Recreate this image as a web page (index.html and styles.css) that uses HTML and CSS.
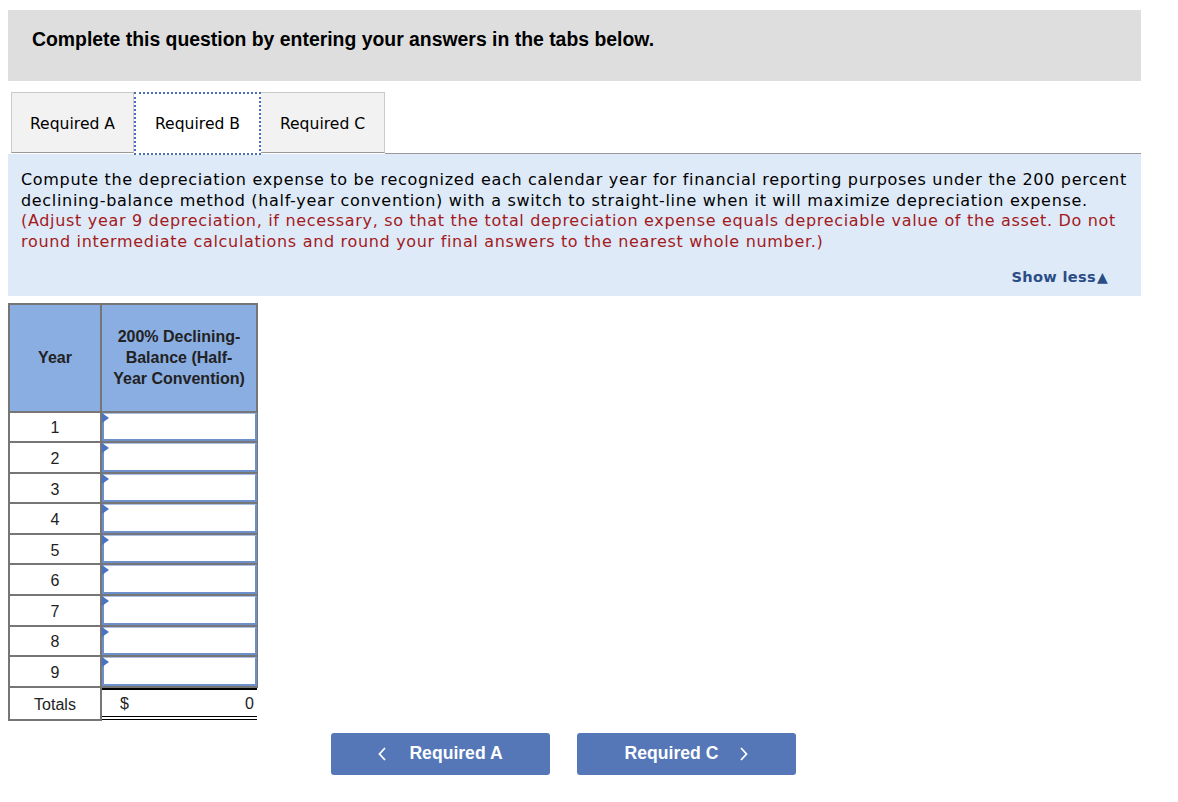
FILE: index.html
```html
<!DOCTYPE html>
<html lang="en">
<head>
    <meta charset="UTF-8">
    <title>Required B</title>
    <link rel="stylesheet" href="styles.css">
</head>
<body>
    <div class="page">
        <div class="banner">
            <h1>Complete this question by entering your answers in the tabs below.</h1>
        </div>

        <div class="tabs">
            <div class="tab">Required A</div>
            <div class="tab active">Required B</div>
            <div class="tab last">Required C</div>
            <div class="tab-rest"></div>
        </div>

        <div class="instructions">
            <p>Compute the depreciation expense to be recognized each calendar year for financial reporting purposes under the 200 percent declining-balance method (half-year convention) with a switch to straight-line when it will maximize depreciation expense.
            <span class="red">(Adjust year 9 depreciation, if necessary, so that the total depreciation expense equals depreciable value of the asset. Do not round intermediate calculations and round your final answers to the nearest whole number.)</span></p>
            <div class="show-less">Show less<span class="tri">&#9650;</span></div>
        </div>

        <table class="grid">
            <thead>
                <tr>
                    <th class="year-col">Year</th>
                    <th class="val-col">200% Declining-<br>Balance (Half-<br>Year Convention)</th>
                </tr>
            </thead>
            <tbody>
                <tr><td>1</td><td class="cell"><div class="entry"></div></td></tr>
                <tr><td>2</td><td class="cell"><div class="entry"></div></td></tr>
                <tr><td>3</td><td class="cell"><div class="entry"></div></td></tr>
                <tr><td>4</td><td class="cell"><div class="entry"></div></td></tr>
                <tr><td>5</td><td class="cell"><div class="entry"></div></td></tr>
                <tr><td>6</td><td class="cell"><div class="entry"></div></td></tr>
                <tr><td>7</td><td class="cell"><div class="entry"></div></td></tr>
                <tr><td>8</td><td class="cell"><div class="entry"></div></td></tr>
                <tr><td>9</td><td class="cell"><div class="entry"></div></td></tr>
                <tr class="totals">
                    <td>Totals</td>
                    <td class="total-cell"><span>$</span><span>0</span></td>
                </tr>
            </tbody>
        </table>

        <div class="nav">
            <button class="nav-btn">
                <svg class="chev" width="8" height="14" viewBox="0 0 8 14"><polyline points="7,1 1.5,7 7,13" fill="none" stroke="#fff" stroke-width="1.8"/></svg>
                Required A
            </button>
            <button class="nav-btn">
                Required C
                <svg class="chev right" width="8" height="14" viewBox="0 0 8 14"><polyline points="1,1 6.5,7 1,13" fill="none" stroke="#fff" stroke-width="1.8"/></svg>
            </button>
        </div>
    </div>
</body>
</html>
```

FILE: styles.css
```css
body {
    margin: 0;
    padding: 10px 0 0 8px;
    font-family: "Liberation Sans", Arial, sans-serif;
    color: #000;
    background: #fff;
}
.page {
    width: 1133px;
}
.banner {
    background: #dedede;
    height: 71px;
    padding: 0 24px;
    display: flex;
    align-items: center;
}
.banner h1 {
    margin: 0;
    font-size: 19.4px;
    font-weight: bold;
    position: relative;
    top: -6px;
}
.tabs {
    display: flex;
    margin-top: 11px;
    font-family: "DejaVu Sans", Verdana, sans-serif;
    font-size: 15.6px;
}
.tab {
    height: 61px;
    box-sizing: border-box;
    padding-top: 3px;
    display: flex;
    align-items: center;
    justify-content: center;
    background: #f2f2f2;
    border: 1px solid #cbcbcb;
    border-bottom: 1px solid #999;
    margin-left: 3px;
    width: 123px;
}
.tab.active {
    margin-left: 0;
    padding-top: 1px;
    background: #fff;
    border: 2px dotted #4a6fb5;
    width: 127px;
    height: 63px;
    margin-bottom: -1px;
}
.tab.last {
    margin-left: 0;
    border-left: none;
    width: 124px;
}
.tab-rest {
    flex: 1;
    border-bottom: 1px solid #999;
}
.instructions {
    background: #deeaf8;
    padding: 16px 13px 8px 13px;
    font-family: "DejaVu Sans", Verdana, sans-serif;
    font-size: 16px;
    line-height: 20.7px;
    letter-spacing: 0.68px;
}
.instructions p {
    margin: 0;
}
.red {
    color: #a3191c;
}
.show-less {
    text-align: right;
    margin-top: 14px;
    margin-right: 20px;
    font-size: 14.6px;
    letter-spacing: 0.3px;
    font-weight: bold;
    color: #2b4d86;
}
.tri {
    font-size: 14px;
    margin-left: 1px;
}
.grid {
    margin-top: 7px;
    border-collapse: collapse;
    font-size: 16px;
}
.grid th {
    background: #8aaee2;
    border: 2px solid #767676;
    font-weight: bold;
    font-size: 16px;
    height: 106px;
    color: #222;
    line-height: 21px;
    padding: 0;
}
.year-col {
    width: 90px;
}
.val-col {
    width: 154px;
}
.grid td {
    border: 2px solid #767676;
    text-align: center;
    height: 25.6px;
    padding: 3px 0 0 0;
    color: #222;
}
.grid td.cell {
    padding: 0;
    vertical-align: top;
}
.entry {
    position: relative;
    height: 25.6px;
    margin-right: -1px;
    border: 2px solid #6d8fcc;
    border-top: 1px solid #a9bfe6;
    background: #fff;
}
.entry::before {
    content: "";
    position: absolute;
    left: -2px;
    top: -1px;
    border-left: 7px solid #4a73c4;
    border-top: 5px solid transparent;
    border-bottom: 5px solid transparent;
}
.totals td {
    border-bottom: 2px solid #767676;
}
.grid .total-cell {
    display: flex;
    justify-content: space-between;
    padding: 2px 3px 0 18px;
    height: 24px;
    align-items: center;
    border: none;
    border-top: 2px solid #000;
    border-bottom: 4px double #000;
}
.nav {
    display: flex;
    gap: 27px;
    margin: 12px 0 0 323px;
}
.nav-btn {
    width: 219px;
    height: 42px;
    background: #5577b8;
    color: #fff;
    border: none;
    border-radius: 3px;
    font-family: "Liberation Sans", Arial, sans-serif;
    font-size: 17.6px;
    font-weight: bold;
    display: flex;
    align-items: center;
    justify-content: center;
}
.chev {
    margin-right: 23px;
}
.chev.right {
    margin-right: 0;
    margin-left: 22px;
}
```
